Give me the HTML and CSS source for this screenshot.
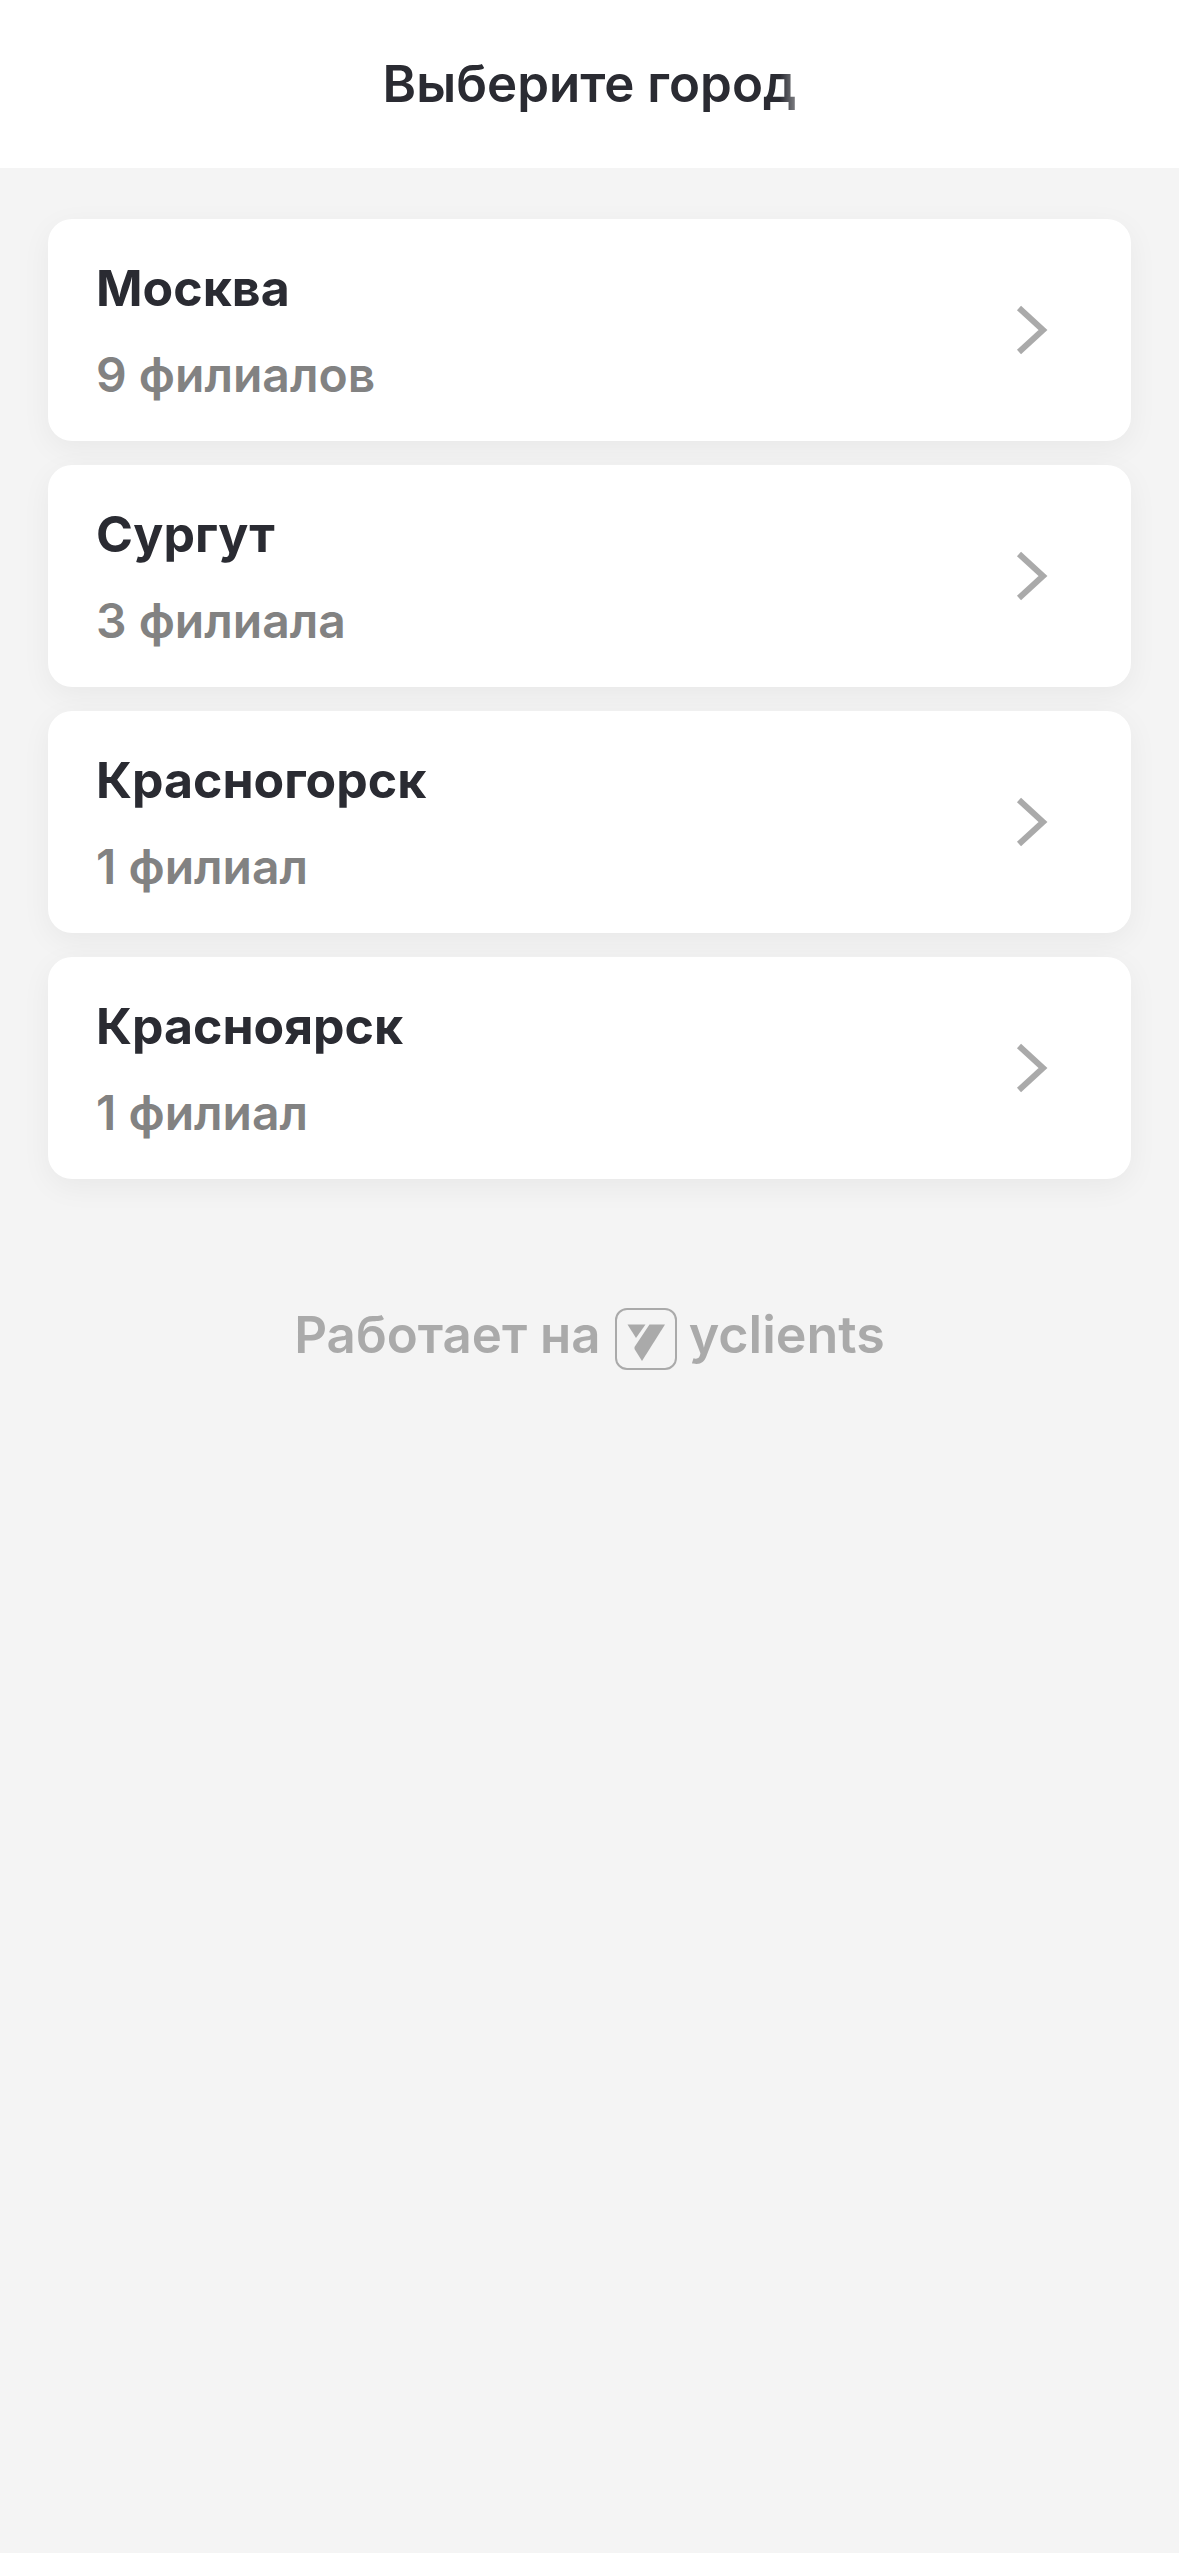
FILE: index.html
```html
<!DOCTYPE html>
<html lang="ru">
<head>
<meta charset="utf-8">
<meta name="viewport" content="width=device-width, initial-scale=1">
<title>Выберите город</title>
<link rel="stylesheet" href="styles.css">
</head>
<body>
<header class="header"><h1 class="title">Выберите город</h1></header>
<main class="cities">
  <a class="city" href="#moscow">
    <span class="info"><span class="name">Москва</span><span class="count">9 филиалов</span></span>
    <svg class="chevron" viewBox="0 0 30 48" aria-hidden="true"><path d="M2 2L26 24L2 46"/></svg>
  </a>
  <a class="city" href="#surgut">
    <span class="info"><span class="name">Сургут</span><span class="count">3 филиала</span></span>
    <svg class="chevron" viewBox="0 0 30 48" aria-hidden="true"><path d="M2 2L26 24L2 46"/></svg>
  </a>
  <a class="city" href="#krasnogorsk">
    <span class="info"><span class="name">Красногорск</span><span class="count">1 филиал</span></span>
    <svg class="chevron" viewBox="0 0 30 48" aria-hidden="true"><path d="M2 2L26 24L2 46"/></svg>
  </a>
  <a class="city" href="#krasnoyarsk">
    <span class="info"><span class="name">Красноярск</span><span class="count">1 филиал</span></span>
    <svg class="chevron" viewBox="0 0 30 48" aria-hidden="true"><path d="M2 2L26 24L2 46"/></svg>
  </a>
</main>
<footer class="footer">
  <span>Работает на</span>
  <a class="brand" href="#yclients">
    <svg class="logo" viewBox="0 0 62 62" aria-hidden="true"><rect x="1" y="1" width="60" height="60" rx="11"/><path d="M12.5 16.5H30.5L21 30Z"/><path d="M34.5 16.5H50L27 53L19.5 41V39Z"/></svg>
    <span class="wordmark">yclients</span>
  </a>
</footer>
</body>
</html>
```

FILE: styles.css
```css
* { box-sizing: border-box; }
body { margin: 0; min-height: 100vh; background: #f4f4f4; color: #2a2b32; font-family: Inter, sans-serif; }
.header { display: flex; align-items: center; justify-content: center; min-height: 168px; background: #fff; }
.title { margin: 0; font-size: 51px; line-height: 60px; font-weight: 600; -webkit-mask-image: linear-gradient(to right, #000 calc(100% - 16px), rgba(0, 0, 0, 0.6)); mask-image: linear-gradient(to right, #000 calc(100% - 16px), rgba(0, 0, 0, 0.6)); }
.cities { display: flex; flex-direction: column; gap: 24px; padding: 51px 48px 0; }
.city { display: flex; align-items: center; justify-content: space-between; min-height: 222px; padding: 0 84px 0 48px; border-radius: 24px; background: #fff; box-shadow: 0 8px 30px rgba(0, 0, 0, 0.05); color: inherit; text-decoration: none; }
.info { display: flex; flex-direction: column; gap: 20px; }
.name { font-size: 50px; line-height: 70px; font-weight: 700; }
.count { color: #828282; font-size: 48px; line-height: 64px; font-weight: 600; }
.chevron { width: 30px; height: 48px; overflow: visible; fill: none; stroke: #aaa; stroke-width: 6; }
.footer { display: flex; align-items: flex-start; justify-content: center; gap: 14px; padding-top: 129px; color: #aaa; font-size: 51px; line-height: 54px; font-weight: 600; }
.brand { display: flex; align-items: flex-start; gap: 12px; color: inherit; text-decoration: none; }
.logo { width: 62px; height: 62px; fill: #aaa; }
.logo rect { fill: none; stroke: #aaa; stroke-width: 2; }
.wordmark { font-size: 52px; }
```
